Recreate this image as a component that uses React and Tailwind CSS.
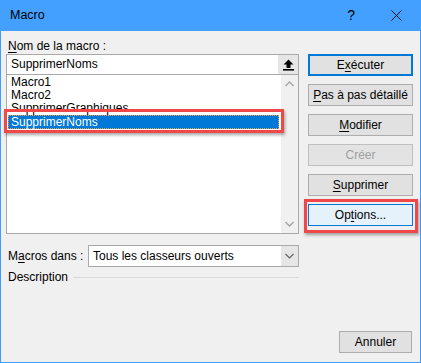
import React from "react";

const font = "font-['Segoe_UI','Liberation_Sans',sans-serif]";

const Btn = ({ children, className = "" }) => (
  <div
    className={`h-[22px] flex items-center justify-center border text-[12px] text-black ${className}`}
  >
    {children}
  </div>
);

const Chevron = ({ up }) => (
  <svg width="9" height="6" viewBox="0 0 9 6">
    <path
      d={up ? "M0.5 5 L4.5 1 L8.5 5" : "M0.5 1 L4.5 5 L8.5 1"}
      fill="none"
      stroke="#a3a3a3"
      strokeWidth="1.3"
    />
  </svg>
);

const App = () => {
  const macros = ["Macro1", "Macro2", "SupprimerGraphiques"];

  return (
    <div className={`relative w-[421px] h-[363px] bg-[#f0f0f0] border-x border-b border-[#3f9dfd] flex flex-col ${font}`}>
      {/* Title bar */}
      <div className="h-[31px] -mx-px bg-[#44a0ff] flex items-center pl-[10px] text-[12.5px] text-black">
        <span>Macro</span>
        <span className="ml-auto text-[14px] mr-[36px]">?</span>
        <svg width="11" height="11" viewBox="0 0 11 11" className="mr-[19px]">
          <path d="M0.5 0.5 L10.5 10.5 M10.5 0.5 L0.5 10.5" stroke="#111" strokeWidth="1" />
        </svg>
      </div>

      <div className="flex pl-[5px] pt-[7px]">
        {/* Left column */}
        <div className="w-[293px] flex flex-col">
          <div className="h-[16px] text-[12px] leading-[16px] pl-[2px]">
            <span className="underline underline-offset-2">N</span>om de la macro :
          </div>
          <div className="h-[21px] border border-[#a9a9a9] bg-white flex">
            <div className="flex-1 pl-[4px] text-[12px] leading-[19px]">SupprimerNoms</div>
            <div className="w-[20px] bg-[#e6e6e6] flex items-center justify-center">
              <svg width="11" height="12" viewBox="0 0 11 12">
                <path d="M5.5 0.5 L10.5 5.5 L7.5 5.5 L7.5 9 L3.5 9 L3.5 5.5 L0.5 5.5 Z" fill="#000" />
                <rect x="0" y="10" width="11" height="1.6" fill="#000" />
              </svg>
            </div>
          </div>
          <div className="h-[159px] border border-[#a9a9a9] border-t-0 bg-white flex">
            <div className="flex-1 pt-[1px] pl-[1px] pr-[2px] text-[12px]">
              {macros.map((m) => (
                <div key={m} className="h-[13px] leading-[13px] pl-[3px]">
                  {m}
                </div>
              ))}
              <div className="h-[14px] leading-[12px] pl-[2px] bg-[#0078d7] text-white border border-dotted border-[#f0a040]">
                SupprimerNoms
              </div>
            </div>
            <div className="w-[17px] bg-[#f0f0f0] flex flex-col items-center justify-between py-[6px]">
              <Chevron up />
              <Chevron />
            </div>
          </div>

          <div className="mt-[11px] flex items-center">
            <div className="w-[82px] pl-[2px] text-[12px]">
              M<span className="underline underline-offset-2">a</span>cros dans :
            </div>
            <div className="flex-1 h-[22px] border border-[#a9a9a9] bg-white flex">
              <div className="flex-1 pl-[4px] text-[12px] leading-[20px]">Tous les classeurs ouverts</div>
              <div className="w-[17px] bg-[#e6e6e6] flex items-center justify-center">
                <svg width="9" height="6" viewBox="0 0 9 6">
                  <path d="M0.5 1 L4.5 5 L8.5 1" fill="none" stroke="#606060" strokeWidth="1.1" />
                </svg>
              </div>
            </div>
          </div>

          <div className="mt-[1px] flex items-center gap-[5px]">
            <span className="pl-[2px] text-[12px]">Description</span>
            <div className="flex-1 h-px bg-[#dadada]" />
          </div>
        </div>

        {/* Right column */}
        <div className="ml-[9px] w-[105px] flex flex-col gap-[8px] pt-[16px]">
          <Btn className="border-2 border-[#0078d7] bg-[#e1e1e1]">
            <span>
              E<span className="underline underline-offset-2">x</span>écuter
            </span>
          </Btn>
          <Btn className="border-[#adadad] bg-[#e1e1e1]">
            <span>
              <span className="underline underline-offset-2">P</span>as à pas détaillé
            </span>
          </Btn>
          <Btn className="border-[#adadad] bg-[#e1e1e1]">
            <span>
              <span className="underline underline-offset-2">M</span>odifier
            </span>
          </Btn>
          <Btn className="border-[#bfbfbf] bg-[#e3e3e3] text-[#a0a0a0]!">Créer</Btn>
          <Btn className="border-[#adadad] bg-[#e1e1e1]">
            <span>
              <span className="underline underline-offset-2">S</span>upprimer
            </span>
          </Btn>
          <Btn className="border-[#0078d7] bg-[#e5f1fb]">
            <span>
              Op<span className="underline underline-offset-2">t</span>ions...
            </span>
          </Btn>
        </div>
      </div>

      <div className="mt-auto mb-[9px] mr-[8px] flex justify-end">
        <Btn className="w-[73px] border-[#adadad] bg-[#e1e1e1]">Annuler</Btn>
      </div>

      {/* Highlight annotations */}
      <div className="absolute left-[3px] top-[109px] w-[280px] h-[24px] border-[3px] border-[#f04848] shadow-[1px_2px_3px_rgba(0,0,0,0.35)]" />
      <div className="absolute left-[303px] top-[199px] w-[114px] h-[34px] border-[3px] border-[#f04848] shadow-[1px_2px_3px_rgba(0,0,0,0.35)]" />
    </div>
  );
};

export default App;
